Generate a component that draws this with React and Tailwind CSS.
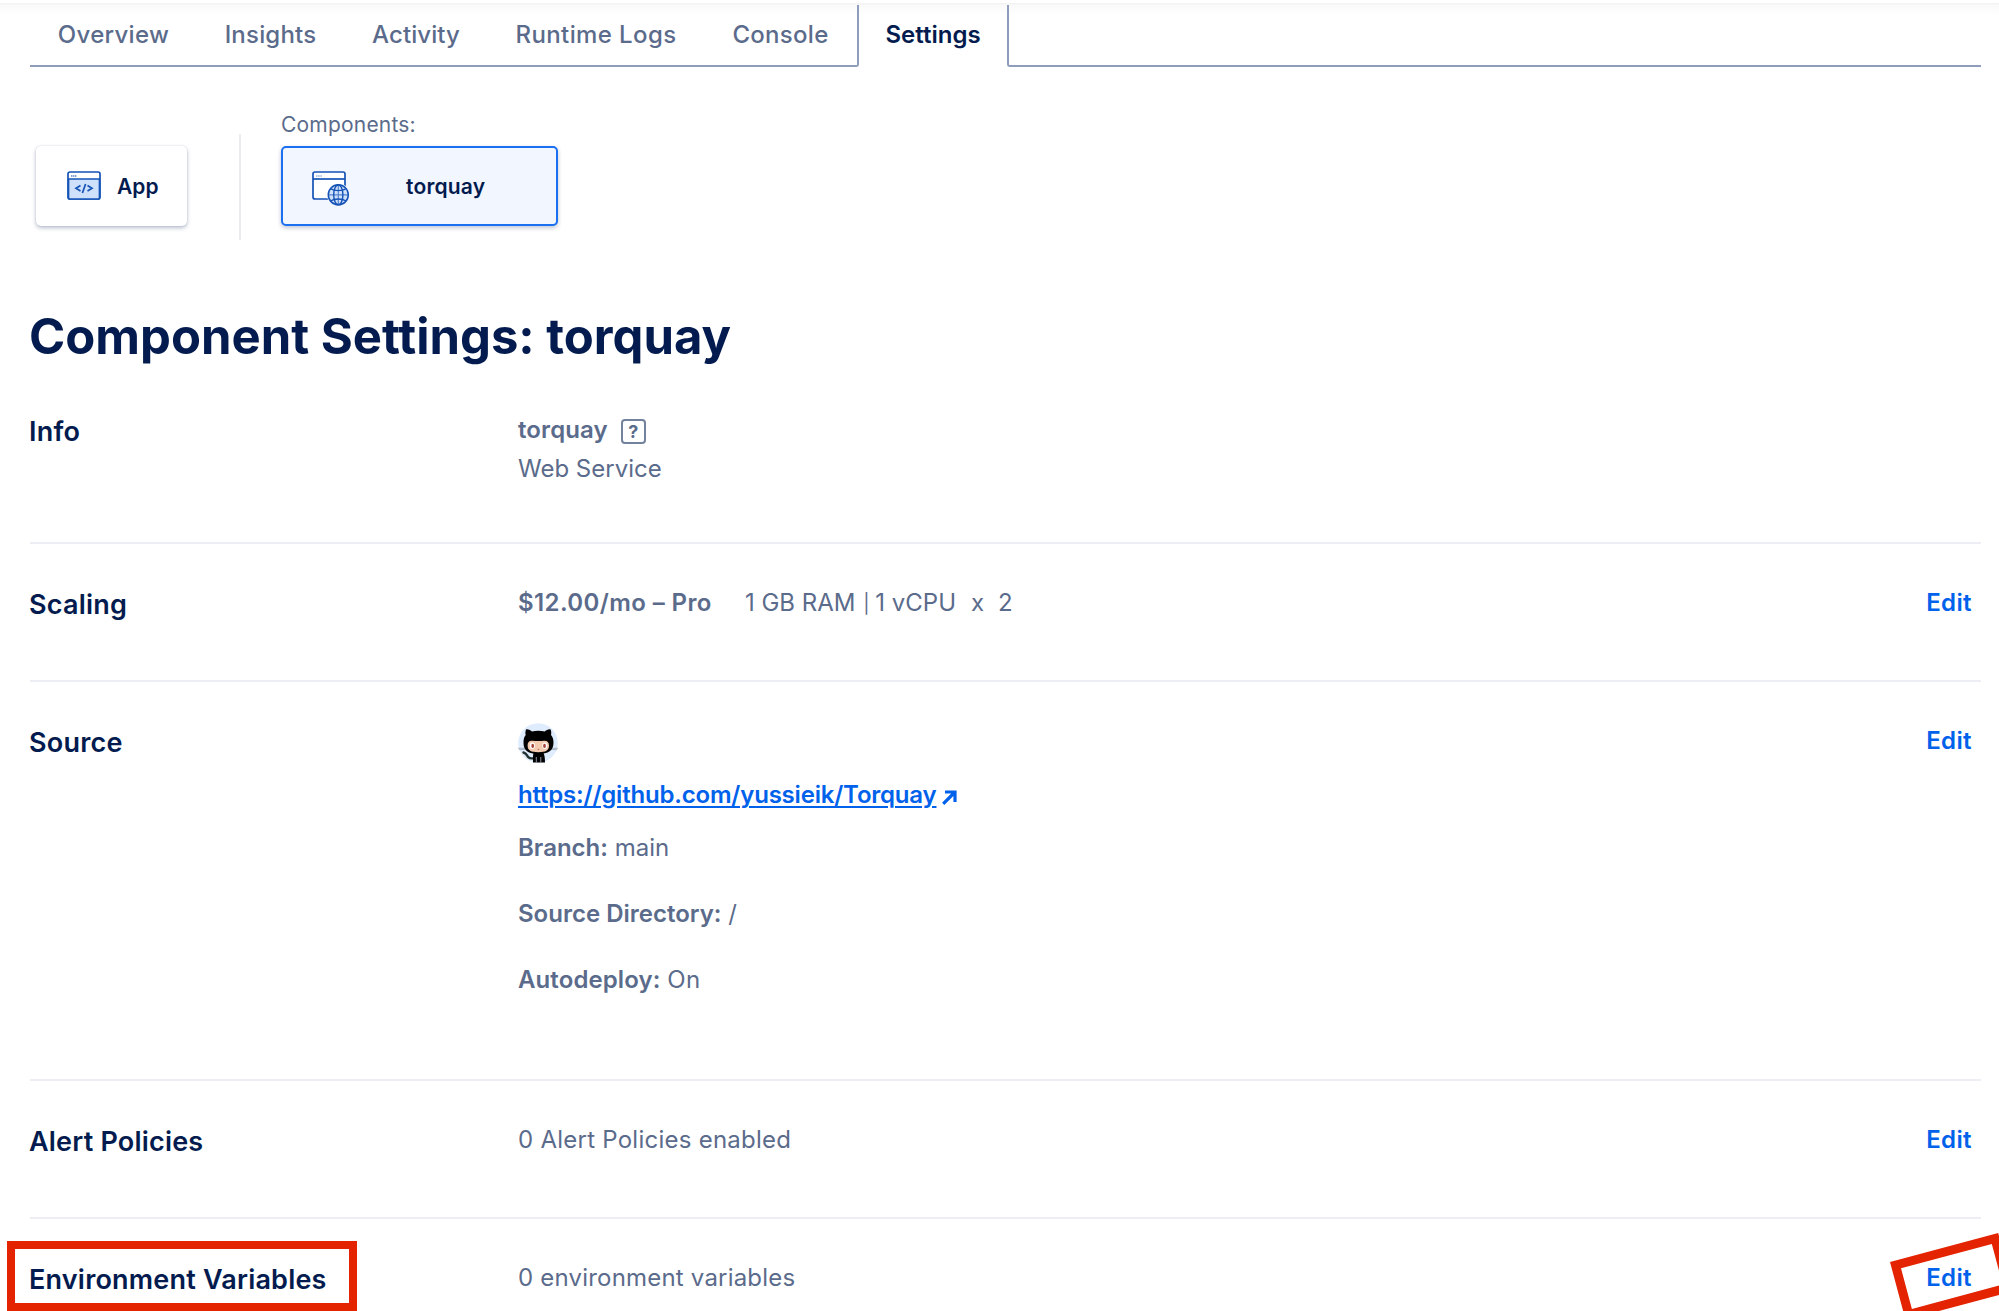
import React from "react";

const tabs = [
  { label: "Overview", cls: "w-[167px] tracking-[0.3px]" },
  { label: "Insights", cls: "w-[147px] tracking-[0.2px]" },
  { label: "Activity", cls: "w-[144px] tracking-[0.1px]" },
  { label: "Runtime Logs", cls: "w-[216px] tracking-[0.4px]" },
  { label: "Console", cls: "w-[153px] tracking-[0.3px]" },
];

function CodeWindowIcon() {
  return (
    <svg width="34" height="30" viewBox="0 0 34 30" fill="none" stroke="#1553b6" strokeWidth="1.7">
      <rect x="1" y="1" width="32" height="27" rx="2" fill="#fff" />
      <path d="M1.5 8h31v18.500a1.500 1.500 0 0 1-1.500 1.500H3a1.500 1.500 0 0 1-1.500-1.500z" fill="#cfe0fb" />
      <path d="M4 5h5.500" strokeWidth="1.600" strokeDasharray="1.500 0.500" opacity="0.7" />
      <path d="M13.500 14.500 9 17.300l4.500 2.700M20.500 14.500l4.500 2.800-4.500 2.700M18.600 13l-3.200 9" />
    </svg>
  );
}

function WebWindowIcon() {
  return (
    <svg width="38" height="36" viewBox="0 0 38 36" fill="none" stroke="#1553b6" strokeWidth="1.700">
      <rect x="1" y="1" width="32" height="27" rx="2" fill="#fff" />
      <path d="M1 8h32" />
      <path d="M4 5h6" strokeWidth="1.500" strokeDasharray="1.500 0.700" opacity="0.45" />
      <circle cx="26.300" cy="23.800" r="11.300" fill="#f2f7ff" stroke="none" />
      <circle cx="26.300" cy="23.800" r="10" fill="#cfe0fb" strokeWidth="1.500" />
      <ellipse cx="26.300" cy="23.800" rx="4.600" ry="10" strokeWidth="1.400" />
      <path d="M26.300 13.800v20M16.300 23.800h20" strokeWidth="1.200" opacity="0.65" />
      <path d="M18.500 17.600c4 2.700 11.600 2.700 15.600 0M18.500 30c4-2.700 11.600-2.700 15.600 0" strokeWidth="1.400" />
    </svg>
  );
}

function Octocat() {
  return (
    <svg width="40" height="40" viewBox="0 0 40 40" fill="none">
      <circle cx="20" cy="20" r="19.800" fill="#dfecfe" />
      <path d="M0 25.300h8M32 25.300h8M1 26.800l6-.6M39 26.800l-6-.6" stroke="#8c97a5" strokeWidth="0.700" />
      <path d="M5.500 29.500c3 .6 3.200 3 4.800 4.700 1.500 1.500 3.800 1.400 6 .9" stroke="#22302f" strokeWidth="2.400" strokeLinecap="round" />
      <path d="M15.500 30h10c1 2 1.500 5 1.500 9.500H15c0-4.500-.2-7 .5-9.500z" fill="#000" />
      <path d="M18.300 34v5.500M22.800 34v5.500" stroke="#c5d3e6" strokeWidth="0.700" />
      <path d="M8 6.500c2-.6 4.600.8 6 2 3.500-.9 9-.9 12.600 0 1.500-1.200 4-2.600 6-2 .8 2 .8 4 .4 5.600 1.700 2 2.500 4.300 2.500 7.400 0 8.500-5 11.300-15.200 11.300S5.500 28 5.500 19.500c0-3.100.6-5.400 2.200-7.400-.5-1.600-.4-3.600.3-5.600z" fill="#000" />
      <path d="M9.600 22.500c0-3.300 1.600-4.900 4.600-4.700 4 .3 8 .3 12 0 3-.2 4.800 1.400 4.800 4.700 0 5-3.300 6.700-10.700 6.700S9.600 27.500 9.600 22.500z" fill="#f3cbb0" />
      <ellipse cx="14.400" cy="22.800" rx="2.500" ry="3.200" fill="#fff" />
      <ellipse cx="26.800" cy="22.800" rx="2.500" ry="3.200" fill="#fff" />
      <ellipse cx="14.700" cy="22.900" rx="1.400" ry="2.100" fill="#a8453f" />
      <ellipse cx="26.500" cy="22.900" rx="1.400" ry="2.100" fill="#a8453f" />
      <path d="M19.700 26.400h1.400" stroke="#b5604e" strokeWidth="1" />
    </svg>
  );
}

function Row({ title, height, last = false, children }) {
  return (
    <section className={`flex ${height} items-start ${last ? "" : "border-b-2 border-[#eceef3]"}`}>
      <h2 className="mt-[44px] -ml-px w-[489px] shrink-0 text-[27px] leading-[34px] font-semibold tracking-[0.2px] whitespace-nowrap text-[#031b4e]">{title}</h2>
      <div className="mt-[41px] grow">{children}</div>
      <a className="mt-[41px] mr-[9px] text-[24px] leading-[36px] font-semibold tracking-[0.4px] text-[#0061eb]">Edit</a>
    </section>
  );
}

export default function App() {
  return (
    <div className="relative h-[1311px] w-[1999px] overflow-hidden bg-white font-['Inter',sans-serif] text-[24px] leading-[36px] text-[#5b6b8b]">
      <div className="h-[3px]" />
      <div className="h-[12px] bg-linear-to-b from-[#f1f1f1] via-[#fafafa] via-20% to-white" />

      <nav className="mt-[-10px] ml-[30px] flex h-[62px] w-[1951px] leading-[59px] font-medium">
        <div className="flex rounded-br-[3px] border-r-2 border-b-2 border-[#8f9dbd]">
          {tabs.map((t) => (
            <a key={t.label} className={`text-center whitespace-nowrap ${t.cls}`}>{t.label}</a>
          ))}
        </div>
        <a className="w-[148px] text-center text-[24px] font-semibold text-[#031b4e]">Settings</a>
        <div className="grow rounded-bl-[3px] border-b-2 border-l-2 border-[#8f9dbd]" />
      </nav>

      <div className="mt-[40px] ml-[36px] flex h-[134px] items-start">
        <div className="mt-[39px] flex h-[80px] w-[151px] items-center rounded-[5px] bg-white pl-[31px] shadow-[0_2px_4px_rgba(3,27,78,0.28),0_0_2px_rgba(3,27,78,0.12)]">
          <CodeWindowIcon />
          <span className="mt-px ml-[16px] text-[21px] font-semibold text-[#031b4e]">App</span>
        </div>
        <div className="mt-[27px] ml-[52px] h-[106px] w-[2px] bg-[#ebecef]" />
        <div className="ml-[40px]">
          <div className="h-[39px] pt-px text-[21px] leading-[34px] tracking-[0.2px]">Components:</div>
          <div className="flex h-[80px] w-[277px] items-center rounded-[5px] border-2 border-[#1a70f0] bg-[#f2f7ff] pl-[29px] shadow-[0_2px_4px_rgba(3,27,78,0.25)]">
            <span className="pt-[5px]"><WebWindowIcon /></span>
            <span className="mt-px ml-[56px] text-[21px] font-semibold tracking-[0.2px] text-[#031b4e]">torquay</span>
          </div>
        </div>
      </div>

      <main className="ml-[30px] w-[1951px]">
        <h1 className="mt-[61px] -ml-px h-[70px] text-[49px] leading-[70px] font-bold whitespace-nowrap text-[#031b4e]">Component Settings: torquay</h1>

        <section className="flex h-[172px] items-start border-b-2 border-[#eceef3]">
          <h2 className="mt-[43px] -ml-px w-[489px] text-[27px] leading-[34px] font-semibold tracking-[0.2px] text-[#031b4e]">Info</h2>
          <div className="mt-[40px]">
            <div className="flex h-[39px] items-start">
              <span className="font-semibold tracking-[0.1px]">torquay</span>
              <span className="mt-[7px] ml-[13px] flex h-[25px] w-[25px] items-center justify-center rounded-[4px] border-2 border-[#5b6b8b]/85 text-[18px] leading-none font-bold">?</span>
            </div>
            <div>Web Service</div>
          </div>
        </section>

        <Row title="Scaling" height="h-[138px]">
          <span className="font-semibold tracking-[0.4px]">$12.00/mo – Pro</span>
          <span className="ml-[33px]">1 GB RAM <span className="relative -top-px mr-[-1px] ml-[1px] text-[19px]">|</span> 1 vCPU</span>
          <span className="ml-[15px]">x</span>
          <span className="ml-[14px]">2</span>
        </Row>

        <Row title="Source" height="h-[399px]">
          <Octocat />
          <div className="mt-[14px] flex items-center">
            <a className="font-semibold tracking-[-0.2px] text-[#0061eb] underline decoration-2 underline-offset-[3px]">https://github.com/yussieik/Torquay</a>
            <svg className="mt-[5px] ml-[6px]" width="15" height="15" viewBox="0 0 15 15" fill="none" stroke="#0061eb" strokeWidth="3.200">
              <path d="M1.200 13.800 12 3M3 2h10v10" />
            </svg>
          </div>
          <div className="mt-[17px]"><b className="font-semibold">Branch:</b> main</div>
          <div className="mt-[30px]"><b className="font-semibold">Source Directory:</b> /</div>
          <div className="mt-[30px]"><b className="font-semibold tracking-[0.1px]">Autodeploy:</b> <span className="tracking-[0.5px]">On</span></div>
        </Row>

        <Row title="Alert Policies" height="h-[138px]"><span className="tracking-[0.250px]">0 Alert Policies enabled</span></Row>

        <Row title="Environment Variables" height="h-[94px]" last><span className="tracking-[0.200px]">0 environment variables</span></Row>
      </main>

      <div className="absolute top-[1241px] left-[7px] h-[70px] w-[350px] border-8 border-[#e42300]" />
      <div className="absolute top-[1262px] left-[1890px] h-[60px] w-[112px] origin-top-left -rotate-15 border-[9px] border-[#e42300]" />
    </div>
  );
}
